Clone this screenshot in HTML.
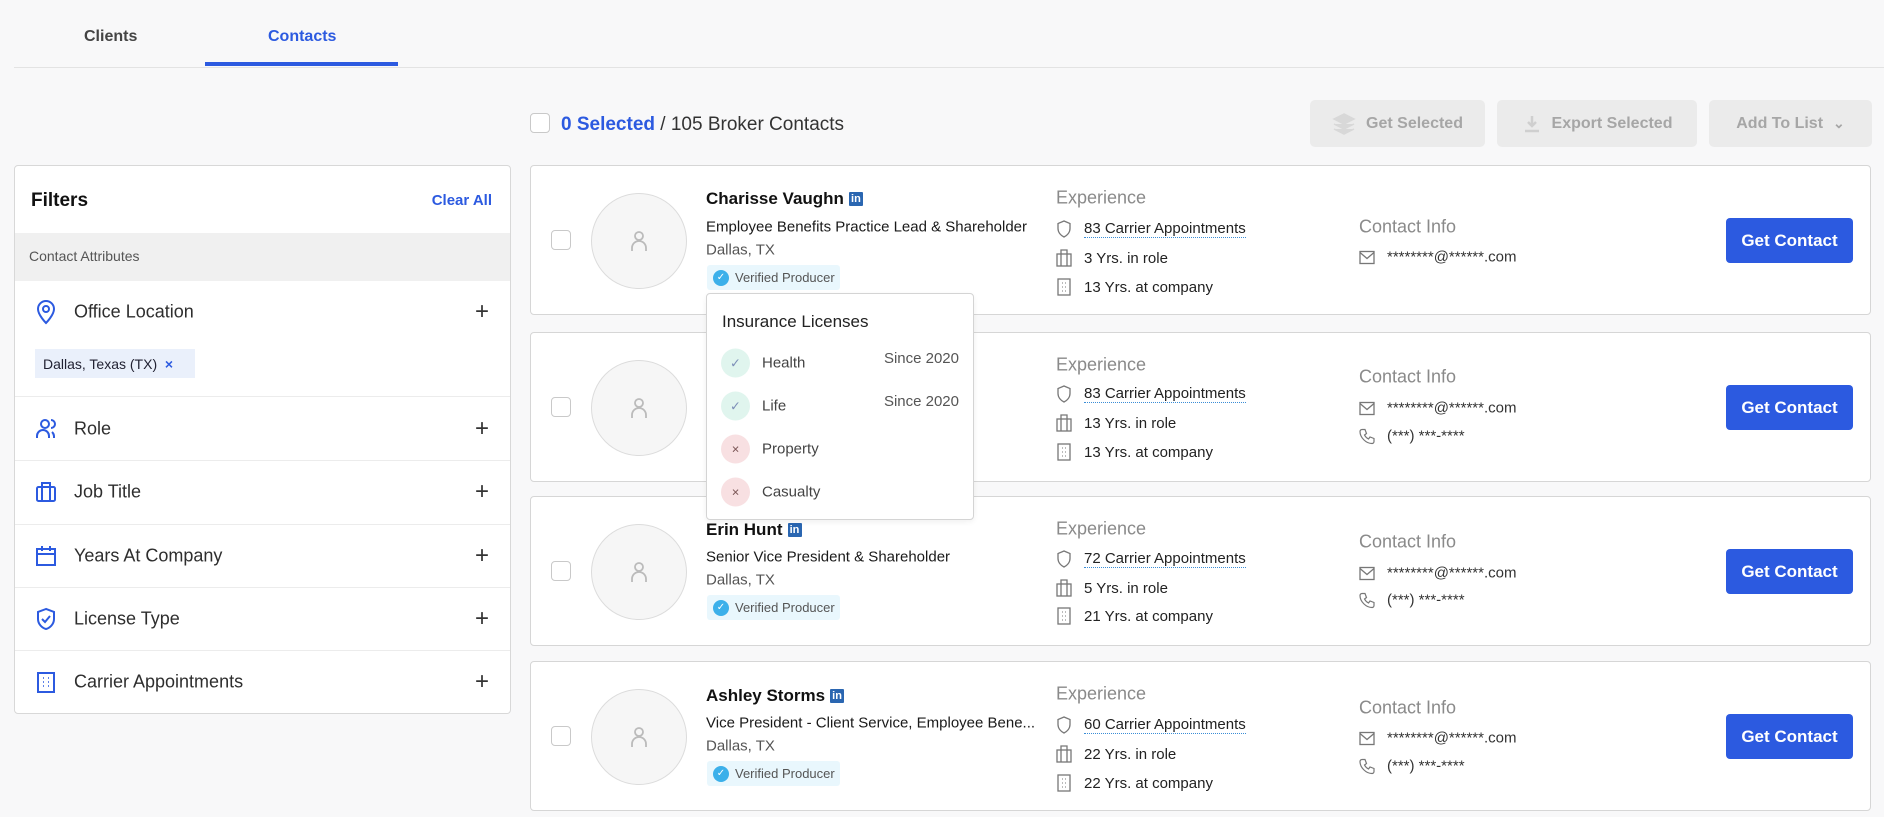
<!DOCTYPE html>
<html><head><meta charset="utf-8"><style>
*{box-sizing:border-box;margin:0;padding:0}
body{width:1884px;height:817px;background:#f8f8f9;font-family:"Liberation Sans",sans-serif;position:relative;overflow:hidden;color:#1f1f1f}
.a{position:absolute;white-space:nowrap}
.tab{font-size:16px;font-weight:bold;top:28px}
.cb{position:absolute;width:20px;height:20px;border:1.5px solid #c9c9c9;border-radius:4px;background:#fff}
.btn{position:absolute;top:100px;height:47px;background:#ebebeb;border-radius:5px;color:#a6a6a6;font-size:16px;font-weight:bold;display:flex;align-items:center;justify-content:center;gap:10px}
.panel{position:absolute;left:14px;top:165px;width:497px;height:549px;background:#fff;border:1px solid #d8d8d8;border-radius:4px}
.frow{position:absolute;left:0;width:100%;}
.frow .lbl{position:absolute;left:59px;font-size:18px;color:#2e2e2e;transform:translateY(-50%)}
.frow svg.ic{position:absolute;left:20px;transform:translateY(-50%)}
.frow .pl{position:absolute;left:460px;transform:translateY(-50%);font-size:24px;color:#333;font-weight:300}
.div{position:absolute;left:0;width:100%;height:1px;background:#ececec}
.card{position:absolute;left:530px;width:1341px;height:150px;background:#fff;border:1px solid #d6d6d6;border-radius:4px}
.av{position:absolute;left:60px;top:27px;width:96px;height:96px;border-radius:50%;border:1px solid #dcdcdc;background:#f6f6f6;display:flex;align-items:center;justify-content:center}
.nm{position:absolute;left:175px;font-size:17px;font-weight:bold;color:#111;transform:translateY(-50%);display:flex;align-items:center;gap:5px}
.li{display:inline-block;width:14px;height:14px;background:#2a66b1;color:#fff;font-size:11px;font-weight:bold;line-height:14px;text-align:center;border-radius:1px}
.t{position:absolute;left:175px;font-size:15px;color:#1a1a1a;transform:translateY(-50%)}
.loc{position:absolute;left:175px;font-size:15px;color:#555;transform:translateY(-50%)}
.badge{position:absolute;left:176px;top:99px;height:25px;width:133px;background:#e9f7fd;border-radius:3px;font-size:13px;color:#555;display:flex;align-items:center;gap:6px;padding-left:6px}
.vd{width:16px;height:16px;border-radius:50%;background:#3cb0ea;color:#fff;font-size:10px;text-align:center;line-height:16px}
.eh{position:absolute;left:525px;font-size:18px;color:#8a8a8a;transform:translateY(-50%)}
.er{position:absolute;left:525px;font-size:15px;color:#222;transform:translateY(-50%);display:flex;align-items:center;gap:12px}
.er svg{flex:none}
.ul{border-bottom:1px dotted #3a8dd6}
.ch{position:absolute;left:828px;font-size:18px;color:#8a8a8a;transform:translateY(-50%)}
.cr{position:absolute;left:828px;font-size:15px;color:#333;transform:translateY(-50%);display:flex;align-items:center;gap:12px}
.gc{position:absolute;left:1195px;top:52px;width:127px;height:45px;background:#2c5ae0;border-radius:4px;color:#fff;font-size:17px;font-weight:bold;display:flex;align-items:center;justify-content:center}
.pop{position:absolute;left:706px;top:293px;width:268px;height:227px;background:#fff;border:1px solid #d4d4d4;border-radius:4px;box-shadow:0 2px 6px rgba(0,0,0,.06)}
.pr{position:absolute;left:14px;display:flex;align-items:center;gap:12px;font-size:15px;color:#444;transform:translateY(-50%)}
.ok,.no{width:29px;height:29px;border-radius:50%;display:flex;align-items:center;justify-content:center;font-size:13px}
.ok{background:#e0f5ee;color:#7d8fb8}
.no{background:#f8e0e2;color:#7a5555}
</style></head><body>

<div class="a tab" style="left:84px;color:#444">Clients</div>
<div class="a tab" style="left:268px;color:#2c5ae0">Contacts</div>
<div class="a" style="left:14px;right:0;top:67px;height:1px;background:#e3e3e3"></div>
<div class="a" style="left:205px;width:193px;top:62px;height:4px;background:#2c5ae0"></div>

<div class="cb" style="left:530px;top:113px"></div>
<div class="a" style="left:561px;top:114px;font-size:19px;color:#333"><b style="color:#2c5ae0">0 Selected</b> / 105 Broker Contacts</div>

<div class="btn" style="left:1310px;width:175px"><svg width="24" height="24" viewBox="0 0 24 24"><path d="M12 2 2 7l10 5 10-5z M2 12l10 5 10-5 M2 17l10 5 10-5" fill="#d8d8d8" stroke="#d8d8d8" stroke-width="1.5"/></svg>Get Selected</div>
<div class="btn" style="left:1497px;width:200px"><svg width="20" height="20" viewBox="0 0 20 20"><path d="M10 2v10M6 8l4 4 4-4M3 17h14" stroke="#cfcfcf" stroke-width="2.5" fill="none"/></svg>Export Selected</div>
<div class="btn" style="left:1709px;width:163px">Add To List <span style="font-size:14px">&#8964;</span></div>

<div class="panel">
 <div class="a" style="left:16px;top:24px;font-size:19px;font-weight:bold;color:#111">Filters</div>
 <div class="a" style="right:18px;top:26px;font-size:15px;font-weight:bold;color:#2c5ae0">Clear All</div>
 <div class="a" style="left:0;right:0;top:67px;height:48px;background:#f0f0f0"></div>
 <div class="a" style="left:14px;top:82px;font-size:14px;color:#555">Contact Attributes</div>
 <div class="frow" style="top:146px"><svg class="ic" width="22" height="26" viewBox="0 0 22 26"><path d="M11 24s8-8 8-14a8 8 0 0 0-16 0c0 6 8 14 8 14z" fill="none" stroke="#2c5ae0" stroke-width="2"/><circle cx="11" cy="10" r="3" fill="none" stroke="#2c5ae0" stroke-width="2"/></svg><span class="lbl">Office Location</span><span class="pl">+</span></div>
 <div class="a" style="left:20px;top:183px;width:160px;height:29px;background:#eaf0fb;font-size:14px;color:#223;padding:7px 0 0 8px">Dallas, Texas (TX) &nbsp;<b style="color:#2c5ae0">×</b></div>
 <div class="div" style="top:230px"></div>
 <div class="frow" style="top:263px"><svg class="ic" width="24" height="22" viewBox="0 0 24 22"><circle cx="10" cy="6" r="4" fill="none" stroke="#2c5ae0" stroke-width="2"/><path d="M2 20v-2a6 6 0 0 1 12 0v2M16 2a4 4 0 0 1 0 8M19 20v-2a6 6 0 0 0-2-4" fill="none" stroke="#2c5ae0" stroke-width="2"/></svg><span class="lbl">Role</span><span class="pl">+</span></div>
 <div class="div" style="top:294px"></div>
 <div class="frow" style="top:326px"><svg class="ic" width="22" height="22" viewBox="0 0 22 22"><rect x="2" y="6" width="18" height="14" rx="1.5" fill="none" stroke="#2c5ae0" stroke-width="2"/><path d="M7 6V2h8v4M7 6v14M15 6v14" fill="none" stroke="#2c5ae0" stroke-width="2"/></svg><span class="lbl">Job Title</span><span class="pl">+</span></div>
 <div class="div" style="top:358px"></div>
 <div class="frow" style="top:390px"><svg class="ic" width="22" height="22" viewBox="0 0 22 22"><rect x="2" y="4" width="18" height="16" fill="none" stroke="#2c5ae0" stroke-width="2"/><path d="M2 9h18M7 1v5M15 1v5" stroke="#2c5ae0" stroke-width="2"/></svg><span class="lbl">Years At Company</span><span class="pl">+</span></div>
 <div class="div" style="top:421px"></div>
 <div class="frow" style="top:453px"><svg class="ic" width="22" height="24" viewBox="0 0 22 24"><path d="M11 2 3 5v7c0 5 4 9 8 10 4-1 8-5 8-10V5z" fill="none" stroke="#2c5ae0" stroke-width="2"/><path d="M7 12l3 3 5-6" fill="none" stroke="#2c5ae0" stroke-width="2"/></svg><span class="lbl">License Type</span><span class="pl">+</span></div>
 <div class="div" style="top:484px"></div>
 <div class="frow" style="top:516px"><svg class="ic" width="22" height="22" viewBox="0 0 22 22"><rect x="3" y="2" width="16" height="19" fill="none" stroke="#2c5ae0" stroke-width="2"/><path d="M8 7h1M13 7h1M8 11h1M13 11h1M8 15h1M13 15h1" stroke="#2c5ae0" stroke-width="1.5"/></svg><span class="lbl">Carrier Appointments</span><span class="pl">+</span></div>
</div>

<div class="card" style="top:165px">
 <div class="cb" style="left:20px;top:64px"></div>
 <div class="av"><svg width="22" height="24" viewBox="0 0 22 24"><circle cx="11" cy="7" r="4" fill="none" stroke="#bbb" stroke-width="1.8"/><path d="M4 22v-3a7 7 0 0 1 14 0v3" fill="none" stroke="#bbb" stroke-width="1.8"/></svg></div>
 <div class="nm" style="top:33px">Charisse Vaughn <span class="li">in</span></div>
 <div class="t" style="top:61px">Employee Benefits Practice Lead &amp; Shareholder</div>
 <div class="loc" style="top:84px">Dallas, TX</div>
 <div class="badge"><span class="vd">✓</span>Verified Producer</div>
 <div class="eh" style="top:32px">Experience</div>
 <div class="er" style="top:63px"><svg width="16" height="18" viewBox="0 0 16 18"><path d="M8 1 2 3.5v5c0 4 3 7 6 8.5 3-1.5 6-4.5 6-8.5v-5z" fill="none" stroke="#777" stroke-width="1.3"/></svg><span class="ul">83 Carrier Appointments</span></div>
 <div class="er" style="top:92px"><svg width="16" height="18" viewBox="0 0 16 18"><rect x="1" y="5" width="14" height="12" fill="none" stroke="#777" stroke-width="1.3"/><path d="M5 5V1h6v4M5 5v12M11 5v12" fill="none" stroke="#777" stroke-width="1.3"/></svg>3 Yrs. in role</div>
 <div class="er" style="top:121px"><svg width="16" height="18" viewBox="0 0 16 18"><rect x="2" y="1" width="12" height="16" fill="none" stroke="#777" stroke-width="1.3"/><path d="M6 5h1M9 5h1M6 9h1M9 9h1M6 13h1M9 13h1" stroke="#777"/></svg>13 Yrs. at company</div>
 <div class="ch" style="top:61px">Contact Info</div>
 <div class="cr" style="top:91px"><svg width="16" height="14" viewBox="0 0 16 14"><rect x="1" y="1" width="14" height="12" fill="none" stroke="#777" stroke-width="1.3"/><path d="M1 2l7 6 7-6" fill="none" stroke="#777" stroke-width="1.3"/></svg>********@******.com</div>
 <div class="gc">Get Contact</div>
</div>

<div class="card" style="top:332px">
 <div class="cb" style="left:20px;top:64px"></div>
 <div class="av"><svg width="22" height="24" viewBox="0 0 22 24"><circle cx="11" cy="7" r="4" fill="none" stroke="#bbb" stroke-width="1.8"/><path d="M4 22v-3a7 7 0 0 1 14 0v3" fill="none" stroke="#bbb" stroke-width="1.8"/></svg></div>
 <div class="eh" style="top:32px">Experience</div>
 <div class="er" style="top:61px"><svg width="16" height="18" viewBox="0 0 16 18"><path d="M8 1 2 3.5v5c0 4 3 7 6 8.5 3-1.5 6-4.5 6-8.5v-5z" fill="none" stroke="#777" stroke-width="1.3"/></svg><span class="ul">83 Carrier Appointments</span></div>
 <div class="er" style="top:90px"><svg width="16" height="18" viewBox="0 0 16 18"><rect x="1" y="5" width="14" height="12" fill="none" stroke="#777" stroke-width="1.3"/><path d="M5 5V1h6v4M5 5v12M11 5v12" fill="none" stroke="#777" stroke-width="1.3"/></svg>13 Yrs. in role</div>
 <div class="er" style="top:119px"><svg width="16" height="18" viewBox="0 0 16 18"><rect x="2" y="1" width="12" height="16" fill="none" stroke="#777" stroke-width="1.3"/><path d="M6 5h1M9 5h1M6 9h1M9 9h1M6 13h1M9 13h1" stroke="#777"/></svg>13 Yrs. at company</div>
 <div class="ch" style="top:44px">Contact Info</div>
 <div class="cr" style="top:75px"><svg width="16" height="14" viewBox="0 0 16 14"><rect x="1" y="1" width="14" height="12" fill="none" stroke="#777" stroke-width="1.3"/><path d="M1 2l7 6 7-6" fill="none" stroke="#777" stroke-width="1.3"/></svg>********@******.com</div>
 <div class="cr" style="top:103px"><svg width="16" height="16" viewBox="0 0 16 16"><path d="M3 1h3l1.5 4-2 1.5a9 9 0 0 0 4 4L11 8.5l4 1.5v3a2 2 0 0 1-2 2C7 15 1 9 1 3a2 2 0 0 1 2-2z" fill="none" stroke="#777" stroke-width="1.2"/></svg>(***) ***-****</div>
 <div class="gc">Get Contact</div>
</div>

<div class="card" style="top:496px">
 <div class="cb" style="left:20px;top:64px"></div>
 <div class="av"><svg width="22" height="24" viewBox="0 0 22 24"><circle cx="11" cy="7" r="4" fill="none" stroke="#bbb" stroke-width="1.8"/><path d="M4 22v-3a7 7 0 0 1 14 0v3" fill="none" stroke="#bbb" stroke-width="1.8"/></svg></div>
 <div class="nm" style="top:33px">Erin Hunt <span class="li">in</span></div>
 <div class="t" style="top:60px">Senior Vice President &amp; Shareholder</div>
 <div class="loc" style="top:83px">Dallas, TX</div>
 <div class="badge" style="top:98px"><span class="vd">✓</span>Verified Producer</div>
 <div class="eh" style="top:32px">Experience</div>
 <div class="er" style="top:62px"><svg width="16" height="18" viewBox="0 0 16 18"><path d="M8 1 2 3.5v5c0 4 3 7 6 8.5 3-1.5 6-4.5 6-8.5v-5z" fill="none" stroke="#777" stroke-width="1.3"/></svg><span class="ul">72 Carrier Appointments</span></div>
 <div class="er" style="top:91px"><svg width="16" height="18" viewBox="0 0 16 18"><rect x="1" y="5" width="14" height="12" fill="none" stroke="#777" stroke-width="1.3"/><path d="M5 5V1h6v4M5 5v12M11 5v12" fill="none" stroke="#777" stroke-width="1.3"/></svg>5 Yrs. in role</div>
 <div class="er" style="top:119px"><svg width="16" height="18" viewBox="0 0 16 18"><rect x="2" y="1" width="12" height="16" fill="none" stroke="#777" stroke-width="1.3"/><path d="M6 5h1M9 5h1M6 9h1M9 9h1M6 13h1M9 13h1" stroke="#777"/></svg>21 Yrs. at company</div>
 <div class="ch" style="top:45px">Contact Info</div>
 <div class="cr" style="top:76px"><svg width="16" height="14" viewBox="0 0 16 14"><rect x="1" y="1" width="14" height="12" fill="none" stroke="#777" stroke-width="1.3"/><path d="M1 2l7 6 7-6" fill="none" stroke="#777" stroke-width="1.3"/></svg>********@******.com</div>
 <div class="cr" style="top:103px"><svg width="16" height="16" viewBox="0 0 16 16"><path d="M3 1h3l1.5 4-2 1.5a9 9 0 0 0 4 4L11 8.5l4 1.5v3a2 2 0 0 1-2 2C7 15 1 9 1 3a2 2 0 0 1 2-2z" fill="none" stroke="#777" stroke-width="1.2"/></svg>(***) ***-****</div>
 <div class="gc">Get Contact</div>
</div>

<div class="card" style="top:661px">
 <div class="cb" style="left:20px;top:64px"></div>
 <div class="av"><svg width="22" height="24" viewBox="0 0 22 24"><circle cx="11" cy="7" r="4" fill="none" stroke="#bbb" stroke-width="1.8"/><path d="M4 22v-3a7 7 0 0 1 14 0v3" fill="none" stroke="#bbb" stroke-width="1.8"/></svg></div>
 <div class="nm" style="top:34px">Ashley Storms <span class="li">in</span></div>
 <div class="t" style="top:61px">Vice President - Client Service, Employee Bene...</div>
 <div class="loc" style="top:84px">Dallas, TX</div>
 <div class="badge" style="top:99px"><span class="vd">✓</span>Verified Producer</div>
 <div class="eh" style="top:32px">Experience</div>
 <div class="er" style="top:63px"><svg width="16" height="18" viewBox="0 0 16 18"><path d="M8 1 2 3.5v5c0 4 3 7 6 8.5 3-1.5 6-4.5 6-8.5v-5z" fill="none" stroke="#777" stroke-width="1.3"/></svg><span class="ul">60 Carrier Appointments</span></div>
 <div class="er" style="top:92px"><svg width="16" height="18" viewBox="0 0 16 18"><rect x="1" y="5" width="14" height="12" fill="none" stroke="#777" stroke-width="1.3"/><path d="M5 5V1h6v4M5 5v12M11 5v12" fill="none" stroke="#777" stroke-width="1.3"/></svg>22 Yrs. in role</div>
 <div class="er" style="top:121px"><svg width="16" height="18" viewBox="0 0 16 18"><rect x="2" y="1" width="12" height="16" fill="none" stroke="#777" stroke-width="1.3"/><path d="M6 5h1M9 5h1M6 9h1M9 9h1M6 13h1M9 13h1" stroke="#777"/></svg>22 Yrs. at company</div>
 <div class="ch" style="top:46px">Contact Info</div>
 <div class="cr" style="top:76px"><svg width="16" height="14" viewBox="0 0 16 14"><rect x="1" y="1" width="14" height="12" fill="none" stroke="#777" stroke-width="1.3"/><path d="M1 2l7 6 7-6" fill="none" stroke="#777" stroke-width="1.3"/></svg>********@******.com</div>
 <div class="cr" style="top:104px"><svg width="16" height="16" viewBox="0 0 16 16"><path d="M3 1h3l1.5 4-2 1.5a9 9 0 0 0 4 4L11 8.5l4 1.5v3a2 2 0 0 1-2 2C7 15 1 9 1 3a2 2 0 0 1 2-2z" fill="none" stroke="#777" stroke-width="1.2"/></svg>(***) ***-****</div>
 <div class="gc">Get Contact</div>
</div>

<div class="pop">
 <div class="a" style="left:15px;top:18px;font-size:17px;color:#222">Insurance Licenses</div>
 <div class="pr" style="top:69px"><span class="ok">✓</span>Health</div>
 <div class="a" style="right:14px;top:56px;font-size:15px;color:#555">Since 2020</div>
 <div class="pr" style="top:112px"><span class="ok">✓</span>Life</div>
 <div class="a" style="right:14px;top:99px;font-size:15px;color:#555">Since 2020</div>
 <div class="pr" style="top:155px"><span class="no">×</span>Property</div>
 <div class="pr" style="top:198px"><span class="no">×</span>Casualty</div>
</div>

</body></html>
